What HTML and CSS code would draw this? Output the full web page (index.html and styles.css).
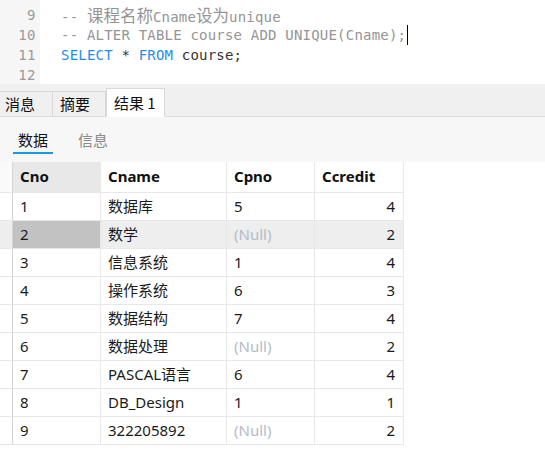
FILE: index.html
```html
<!DOCTYPE html>
<html>
<head>
<meta charset="utf-8">
<link rel="stylesheet" href="styles.css">
</head>
<body>
<div class="editor">
  <div class="lines">
    <div class="line"><span class="num">8</span><span class="code"></span></div>
    <div class="line"><span class="num">9</span><span class="code cm">-- <span class="cjk">课程名称</span>Cname<span class="cjk">设为</span>unique</span></div>
    <div class="line"><span class="num">10</span><span class="code cm">-- ALTER TABLE course ADD UNIQUE(Cname);<span class="caret"></span></span></div>
    <div class="line"><span class="num">11</span><span class="code"><span class="kw">SELECT</span> * <span class="kw">FROM</span> course;</span></div>
    <div class="line"><span class="num">12</span><span class="code"></span></div>
    <div class="line"><span class="num"></span><span class="code"></span></div>
  </div>
</div>
<div class="tabbar">
  <div class="tab">消息</div>
  <div class="tab">摘要</div>
  <div class="tab active">结果 1</div>
</div>
<div class="subtabs">
  <div class="subtab on">数据</div>
  <div class="subtab">信息</div>
</div>
<div class="grid">
  <div class="c sel hd"></div><div class="c hd first cur">Cno</div><div class="c hd">Cname</div><div class="c hd">Cpno</div><div class="c hd">Ccredit</div>

  <div class="c sel"></div><div class="c first">1</div><div class="c">数据库</div><div class="c">5</div><div class="c r">4</div>
  <div class="c sel hl"></div><div class="c first hl cursel">2</div><div class="c hl">数学</div><div class="c hl null">(Null)</div><div class="c hl r">2</div>
  <div class="c sel"></div><div class="c first">3</div><div class="c">信息系统</div><div class="c">1</div><div class="c r">4</div>
  <div class="c sel"></div><div class="c first">4</div><div class="c">操作系统</div><div class="c">6</div><div class="c r">3</div>
  <div class="c sel"></div><div class="c first">5</div><div class="c">数据结构</div><div class="c">7</div><div class="c r">4</div>
  <div class="c sel"></div><div class="c first">6</div><div class="c">数据处理</div><div class="c null">(Null)</div><div class="c r">2</div>
  <div class="c sel"></div><div class="c first">7</div><div class="c">PASCAL语言</div><div class="c">6</div><div class="c r">4</div>
  <div class="c sel"></div><div class="c first">8</div><div class="c">DB_Design</div><div class="c">1</div><div class="c r">1</div>
  <div class="c sel"></div><div class="c first">9</div><div class="c">322205892</div><div class="c null">(Null)</div><div class="c r">2</div>
</div>
</body>
</html>
```

FILE: styles.css
```css
* { box-sizing: border-box; }
html, body { margin: 0; padding: 0; background: #ffffff; }
body { width: 545px; height: 461px; overflow: hidden; font-family: "Noto Sans", "Noto Sans CJK SC", sans-serif; }

.editor { height: 84px; overflow: hidden; background: #ffffff; }
.lines { margin-top: -15px; }
.line { display: flex; height: 20px; line-height: 20px; font-family: "DejaVu Sans Mono", "Noto Sans CJK SC", monospace; font-size: 14px; letter-spacing: 0.2px; }
.num { width: 40px; flex: none; background: #f6f6f6; color: #9a9a9a; text-align: right; padding-right: 4px; letter-spacing: 0.5px; }
.code { padding-left: 21px; color: #333333; white-space: pre; position: relative; }
.cm { color: #959595; }
.cjk { font-family: "Noto Sans CJK SC", sans-serif; font-size: 16.5px; letter-spacing: 0; }
.kw { color: #1d8ef0; }
.caret { display: inline-block; width: 1px; height: 20px; background: #000; vertical-align: top; margin-left: 1px; }

.tabbar { height: 33px; background: #f0f0f0; border-bottom: 1px solid #dadada; display: flex; align-items: flex-end; padding-top: 4px; }
.tab { height: 26px; margin-bottom: -1px; padding: 0 0 0 5px; width: 53px; border: 1px solid #d8d8d8; border-left: none; border-bottom: 1px solid #dadada; background: #f0f0f0; font-size: 15px; line-height: 24px; color: #111; font-family: "Noto Sans CJK SC", sans-serif; }
.tab.active { width: 59px; height: 29px; padding-left: 7px; background: #ffffff; border-bottom-color: #ffffff; border-left: 1px solid #d8d8d8; line-height: 27px; }
.tab.active + .tab { border-left: none; }
.tab:nth-child(2) { width: 53px; padding-left: 7px; }

.subtabs { height: 45px; background: #f7f7f7; display: flex; padding-left: 13px; gap: 20px; }
.subtab { font-family: "Noto Sans CJK SC", sans-serif; font-size: 15px; color: #8a8a8a; padding: 0 5px; height: 37px; line-height: 46px; width: 40px; }
.subtab.on { color: #111; border-bottom: 2px solid #1a9be0; }

.grid { display: grid; grid-template-columns: 13px 88px 126px 88px 89px; grid-auto-rows: 28px; grid-template-rows: 31px; width: 404px; font-family: "Noto Sans", "Noto Sans CJK SC", sans-serif; font-size: 15px; color: #1b1b1b; }
.c { border-right: 1px solid #e8e8e8; border-bottom: 1px solid #e8e8e8; padding: 0 7px; line-height: 26px; white-space: nowrap; background: #fff; }
.c.hd { font-weight: bold; line-height: 29px; color: #111; }
.c.sel { padding: 0; border-right-color: #d4d4d4; background: #fff; }
.c.hd.sel { background: #fafafa; }
.c.cur { background: #e8e8e8; }
.c.hl { background: #eeeeee; }
.c.cursel { background: #c2c2c2; }
.c.r { text-align: right; padding-right: 8px; }
.c.null { color: #b3bccb; }
```
